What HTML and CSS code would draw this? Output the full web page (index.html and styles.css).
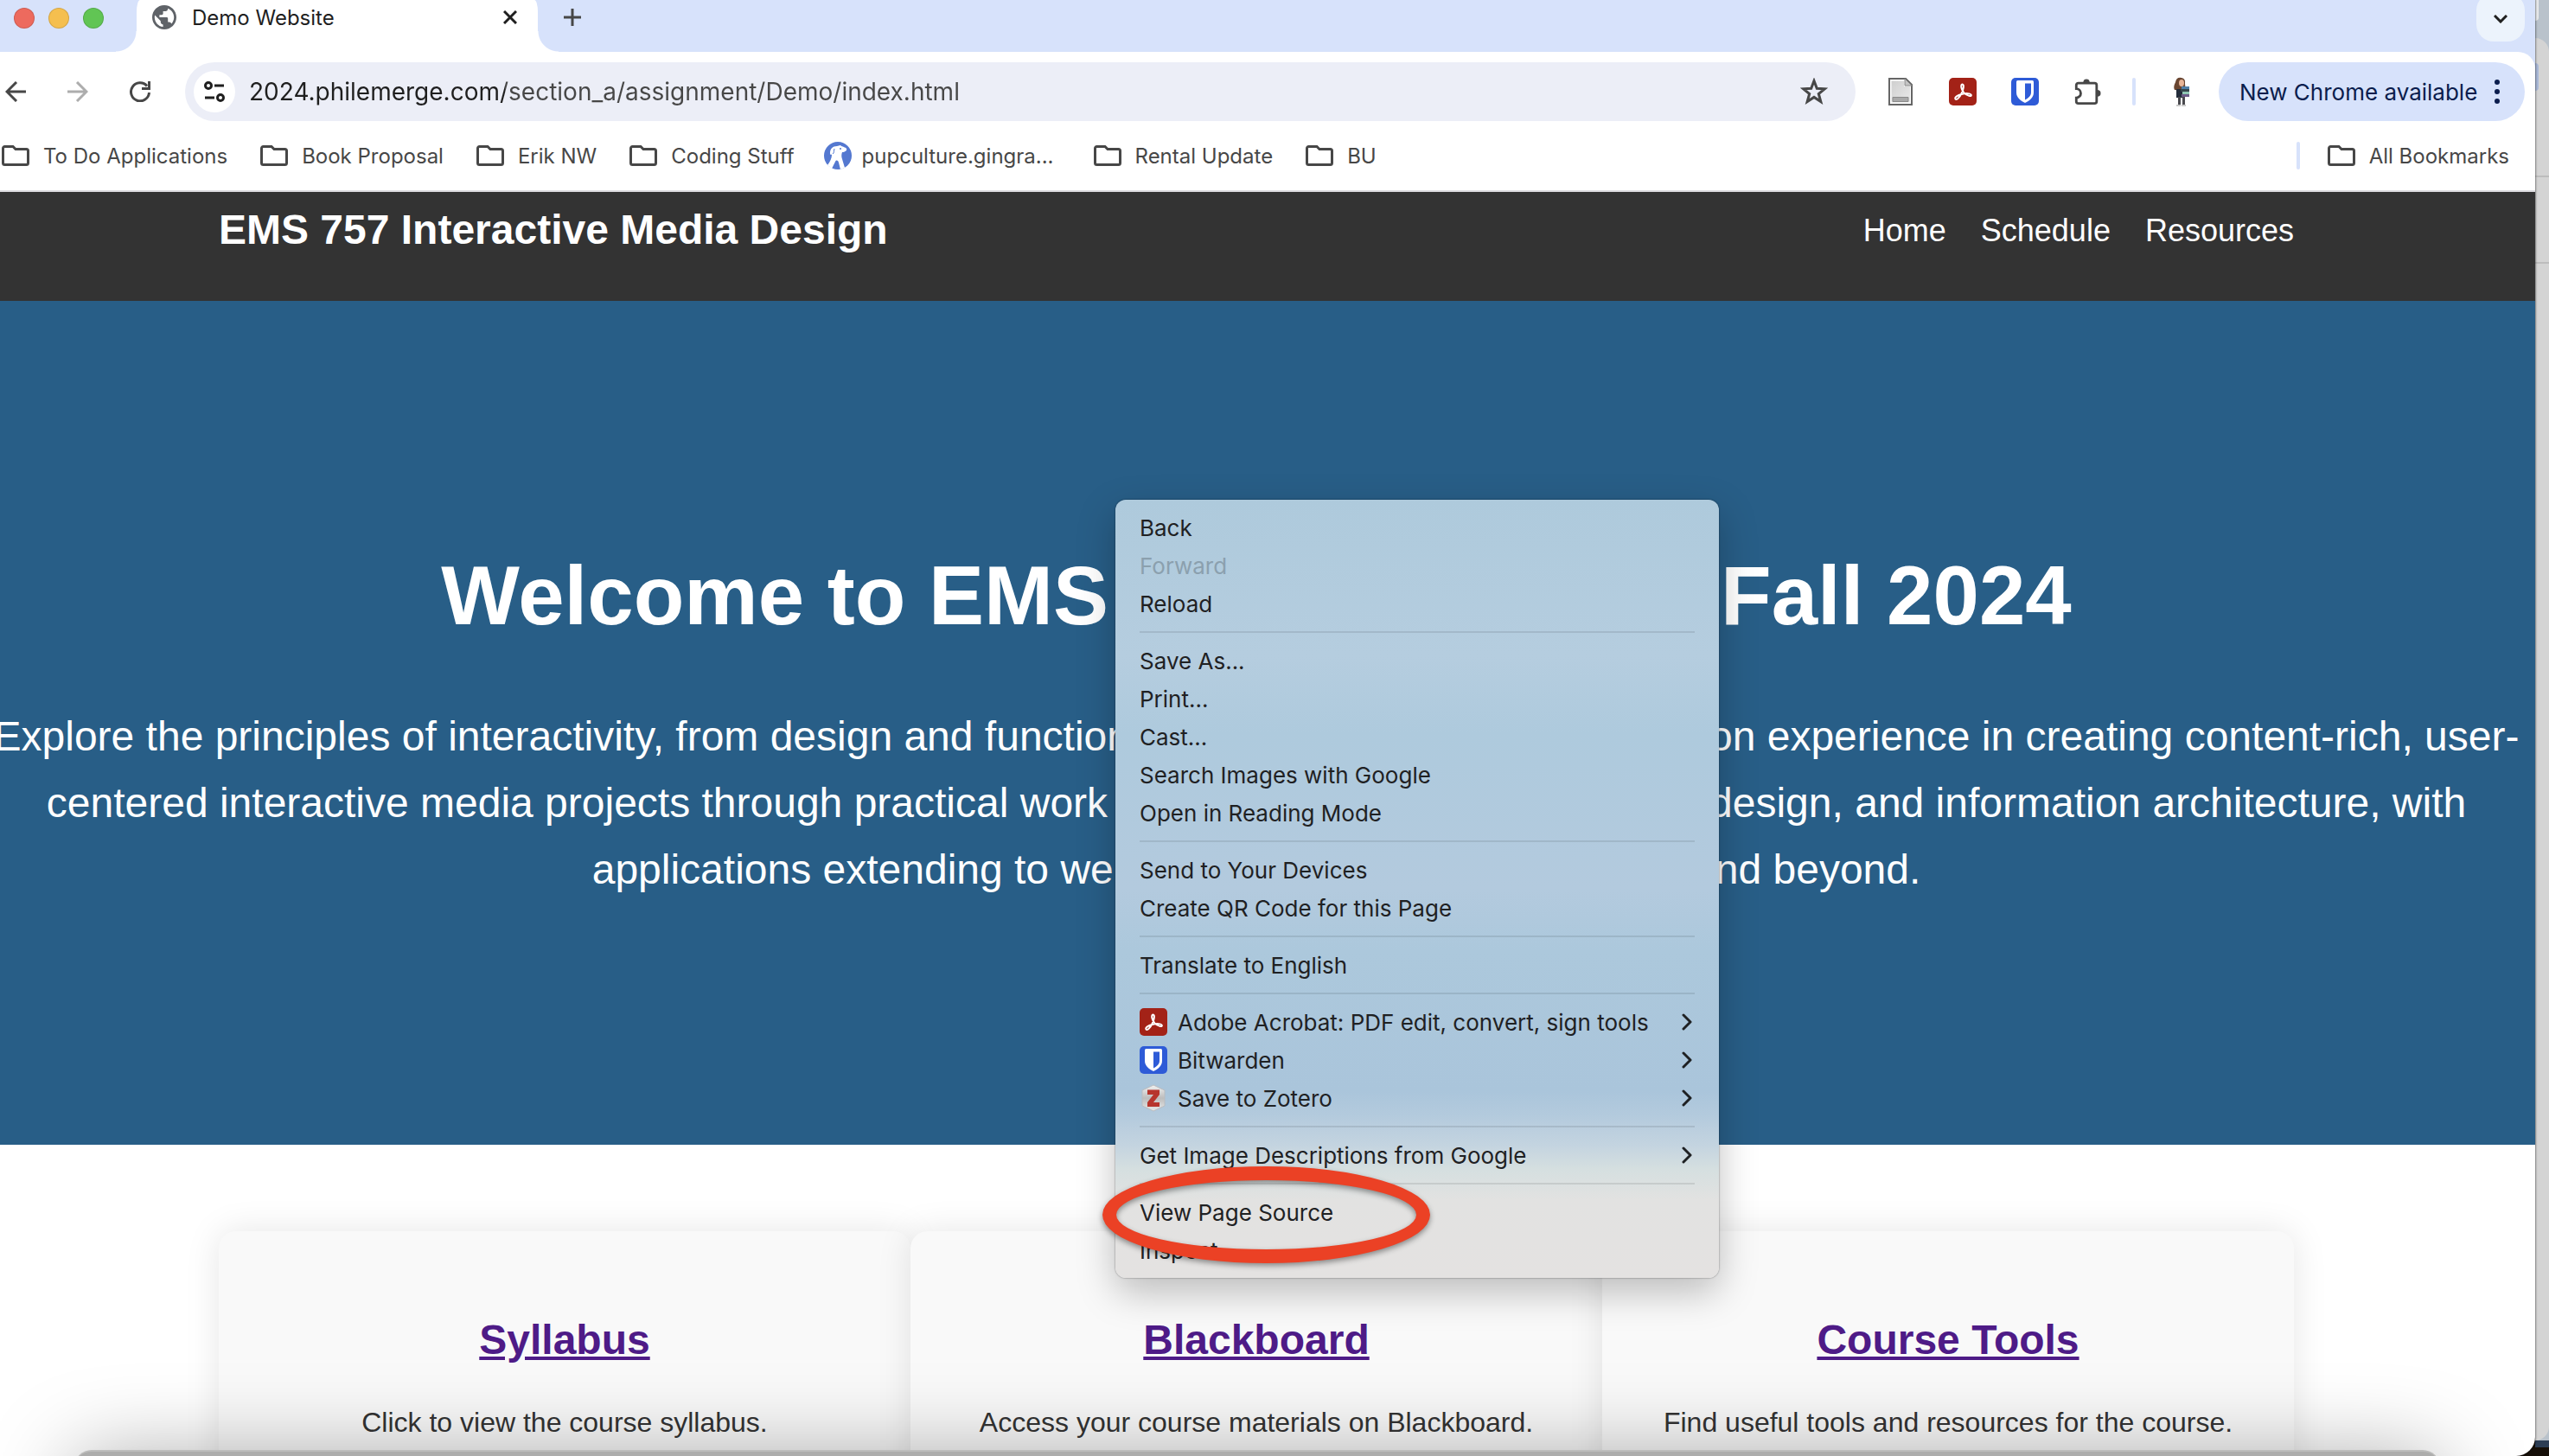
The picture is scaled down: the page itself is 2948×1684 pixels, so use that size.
FILE: index.html
```html
<!DOCTYPE html>
<html lang="en">
<head>
<meta charset="utf-8">
<title>Demo Website</title>
<link rel="stylesheet" href="styles.css">
</head>
<body>
<svg class="defs" aria-hidden="true">
  <symbol id="folder" viewBox="0 0 32 24"><path d="M1.500 4V20.500a2 2 0 0 0 2 2H28.500a2 2 0 0 0 2-2V6.500a2 2 0 0 0-2-2H16L13 1.500H3.500a2 2 0 0 0-2 2z" fill="none" stroke="#474747" stroke-width="3"/></symbol>
  <symbol id="acrobat" viewBox="0 0 32 32"><rect width="32" height="32" rx="5" fill="#a32217"/><path d="M7.500 24.500c-1.500-2 3-4.500 7-5.500 5-1.300 10.500-1.300 11.300.8.800 2.500-4.800 1-8.300-2.300C14.500 14.500 13 8 15.300 7.500c2.700-.3 1.700 6-1 11-2 4-5.200 7.700-6.800 6z" fill="none" stroke="#fff" stroke-width="2"/></symbol>
  <symbol id="bitwarden" viewBox="0 0 32 32"><rect width="32" height="32" rx="5" fill="#2e5bd7"/><path d="M6 4.500Q6 3 7.500 3H24.500Q26 3 26 4.500V17c0 6-5 9.500-10 12C11 26.500 6 23 6 17z" fill="#fff"/><path d="M16 6.500h7V17c0 4-3.500 6.500-7 8.500z" fill="#2e5bd7"/></symbol>
  <symbol id="chevron" viewBox="0 0 12 20"><path d="M2 2l8 8-8 8" fill="none" stroke="#1f2123" stroke-width="3" stroke-linecap="round" stroke-linejoin="round"/></symbol>
</svg>
<div class="desktop">
  <div class="window">
    <header class="chrome">
      <div class="tabstrip">
        <div class="lights">
          <button class="light red" aria-label="Close window"></button>
          <button class="light yellow" aria-label="Minimize window"></button>
          <button class="light green" aria-label="Zoom window"></button>
        </div>
        <div class="tab">
          <svg class="globe" viewBox="2 2 20 20"><path fill="#5f6368" d="M12 2C6.480 2 2 6.480 2 12s4.480 10 10 10 10-4.480 10-10S17.520 2 12 2zm-1 17.930c-3.950-.49-7-3.850-7-7.930 0-.62.080-1.210.21-1.790L9 15v1c0 1.100.9 2 2 2v1.930zm6.900-2.540c-.26-.81-1-1.390-1.900-1.390h-1v-3c0-.55-.45-1-1-1H8v-2h2c.55 0 1-.45 1-1V7h2c1.100 0 2-.9 2-2v-.41c2.930 1.190 5 4.060 5 7.410 0 2.080-.8 3.970-2.100 5.390z"/></svg>
          <span class="tab-title">Demo Website</span>
          <button class="tab-close" aria-label="Close tab"><svg viewBox="0 0 16 16"><path d="M1 1l14 14M15 1L1 15" stroke="#1f1f1f" stroke-width="3"/></svg></button>
        </div>
        <button class="new-tab" aria-label="New tab"><svg viewBox="0 0 20 20"><path d="M10 0v20M0 10h20" stroke="#474747" stroke-width="3"/></svg></button>
        <button class="tab-search" aria-label="Search tabs"><svg viewBox="0 0 16 10"><path d="M1 1l7 7 7-7" fill="none" stroke="#1f1f1f" stroke-width="3"/></svg></button>
      </div>
      <div class="toolbar">
        <div class="history">
          <button aria-label="Back"><svg viewBox="0 0 24 24"><path d="M24 12H2M13 1L2 12l11 11" fill="none" stroke="#474747" stroke-width="3"/></svg></button>
          <button aria-label="Forward" disabled><svg viewBox="0 0 24 24"><path d="M0 12h22M11 1l11 11-11 11" fill="none" stroke="#adadad" stroke-width="3"/></svg></button>
          <button aria-label="Reload"><svg viewBox="0 0 24 24"><path d="M22.500 13A10.500 10.500 0 1 1 20 5.500M22.500 0v8.500H14" fill="none" stroke="#474747" stroke-width="3"/></svg></button>
        </div>
        <div class="address">
          <button class="site-info" aria-label="Site information"><svg viewBox="0 0 24 24"><g fill="none" stroke="#1f1f1f" stroke-width="3"><circle cx="5" cy="5" r="3.500"/><path d="M12 5h11M1 19h11"/><circle cx="19" cy="19" r="3.500"/></g></svg></button>
          <input class="url" type="text" aria-label="Address" value="2024.philemerge.com/section_a/assignment/Demo/index.html">
          <button class="star" aria-label="Bookmark this page"><svg viewBox="0 0 32 32"><path d="M16 3.500l3.300 8.700 9.200.5-7.200 5.800 2.500 9L16 22.400 8.200 27.500l2.500-9-7.200-5.800 9.200-.5z" fill="none" stroke="#474747" stroke-width="3"/></svg></button>
        </div>
        <div class="extensions">
          <button aria-label="Save page"><svg viewBox="0 0 32 32"><defs><linearGradient id="pg" x1="0" y1="0" x2="1" y2="1"><stop offset="0" stop-color="#cfcfcf"/><stop offset="1" stop-color="#e9e9e9"/></linearGradient></defs><path d="M3 1H22l7 7v23H3z" fill="#fff" stroke="#666" stroke-width="2"/><path d="M5.500 3.500H20V10h7v18.500H5.500z" fill="url(#pg)"/><path d="M21 1v8h8z" fill="#c4c4c4" stroke="#888"/><path d="M7 22.500h18v5H7z" fill="#a9a9a9" stroke="#8b8b8b"/></svg></button>
          <button aria-label="Adobe Acrobat"><svg><use href="#acrobat"/></svg></button>
          <button aria-label="Bitwarden"><svg><use href="#bitwarden"/></svg></button>
          <button aria-label="Extensions"><svg viewBox="-2 0 34 32"><path d="M1.500 12V8a2.500 2.500 0 0 1 2.500-2.500H24A2.500 2.500 0 0 1 26.500 8V28a2.500 2.500 0 0 1-2.500 2.500H4A2.500 2.500 0 0 1 1.500 28V23.500a5.500 5.500 0 0 0 0-11z" fill="none" stroke="#474747" stroke-width="3"/><path d="M10 5a4 4.500 0 0 1 8 0zM27 14a4.500 4 0 0 1 0 8z" fill="#474747"/></svg></button>
        </div>
        <span class="divider"></span>
        <button class="profile" aria-label="Profile"><svg viewBox="0 0 32 34"><path d="M8 6Q9 0 15 1q5 1 4 7 1 6-1 8L7 15Q5 12 8 6z" fill="#6a4631"/><ellipse cx="15" cy="7" rx="3" ry="4" fill="#e8b597"/><path d="M9 14l8 0 2 10H9z" fill="#232d3b"/><path d="M11 23h3v9h-3zM16 23h3v9h-3z" fill="#4a4a4f"/><path d="M9 32h5v2H9zM15 32h5v2h-5z" fill="#c9c9c9"/><path d="M15 11h9v3h-9z" fill="#4f7fa8"/><path d="M14 14h10v3H14z" fill="#36474d"/><path d="M16 17h8v3h-8z" fill="#8fc6b4"/><path d="M15 20h9v3h-9z" fill="#6c5a86"/></svg></button>
        <button class="update">New Chrome available<svg viewBox="0 0 6 28"><g fill="#0b1d4d"><circle cx="3" cy="3" r="3"/><circle cx="3" cy="14" r="3"/><circle cx="3" cy="25" r="3"/></g></svg></button>
      </div>
      <nav class="bookmarks" aria-label="Bookmarks">
        <a href="#"><svg class="folder"><use href="#folder"/></svg>To Do Applications</a>
        <a href="#"><svg class="folder"><use href="#folder"/></svg>Book Proposal</a>
        <a href="#"><svg class="folder"><use href="#folder"/></svg>Erik NW</a>
        <a href="#"><svg class="folder"><use href="#folder"/></svg>Coding Stuff</a>
        <a class="site" href="#"><svg class="favicon" viewBox="0 0 32 32"><circle cx="16" cy="16" r="16" fill="#5478d0"/><path d="M7 13c0-5 3-8 8-8l4-1c2 2 6 2 7 4s-2 4-5 4c-1 3-1 5 0 8l3 10-5 2-2-8c-1-3-3-3-4-1l-4 8-5-4c3-4 5-8 5-12-1-1-2 1-2-2z" fill="#fff"/><path d="M12 8c-1 3 0 5-2 6" fill="none" stroke="#5478d0"/><circle cx="19" cy="8" r="1" fill="#5478d0"/></svg>pupculture.gingra...</a>
        <a href="#"><svg class="folder"><use href="#folder"/></svg>Rental Update</a>
        <a href="#"><svg class="folder"><use href="#folder"/></svg>BU</a>
        <span class="divider"></span>
        <a href="#"><svg class="folder"><use href="#folder"/></svg>All Bookmarks</a>
      </nav>
    </header>
    <div class="page">
      <header class="site-header">
        <div class="container">
          <div class="brand">EMS 757 Interactive Media Design</div>
          <nav class="site-nav"><a href="#">Home</a><a href="#">Schedule</a><a href="#">Resources</a></nav>
        </div>
      </header>
      <section class="hero">
        <h1 class="split"><span>Welcome to EMS</span><span>Fall 2024</span></h1>
        <p class="split tight"><span>Explore the principles of interactivity, from design and function</span><span>on experience in creating content-rich, user-</span></p>
        <p class="split"><span>centered interactive media projects through practical work</span><span>design, and information architecture, with</span></p>
        <p class="split"><span>applications extending to we</span><span>nd beyond.</span></p>
      </section>
      <main class="container cards">
        <article class="card"><h2><a href="#">Syllabus</a></h2><p>Click to view the course syllabus.</p></article>
        <article class="card"><h2><a href="#">Blackboard</a></h2><p>Access your course materials on Blackboard.</p></article>
        <article class="card"><h2><a href="#">Course Tools</a></h2><p>Find useful tools and resources for the course.</p></article>
      </main>
    </div>
    <div class="front-window"></div>
    <div class="menu" role="menu">
      <button role="menuitem">Back</button>
      <button role="menuitem" disabled>Forward</button>
      <button role="menuitem">Reload</button>
      <hr>
      <button role="menuitem">Save As...</button>
      <button role="menuitem">Print...</button>
      <button role="menuitem">Cast...</button>
      <button role="menuitem">Search Images with Google</button>
      <button role="menuitem">Open in Reading Mode</button>
      <hr>
      <button role="menuitem">Send to Your Devices</button>
      <button role="menuitem">Create QR Code for this Page</button>
      <hr>
      <button role="menuitem">Translate to English</button>
      <hr>
      <button role="menuitem"><svg class="item-icon"><use href="#acrobat"/></svg>Adobe Acrobat: PDF edit, convert, sign tools<svg class="more"><use href="#chevron"/></svg></button>
      <button role="menuitem"><svg class="item-icon"><use href="#bitwarden"/></svg>Bitwarden<svg class="more"><use href="#chevron"/></svg></button>
      <button role="menuitem"><svg class="item-icon" viewBox="0 0 32 32"><defs><linearGradient id="zh" x1="0" y1="0" x2="0" y2="1"><stop offset="0" stop-color="#f2f2f2"/><stop offset=".5" stop-color="#bdbdbd"/><stop offset="1" stop-color="#e8e8e8"/></linearGradient></defs><path d="M16 1l13 6v18l-13 6-13-6V7z" fill="url(#zh)" stroke="#b9bcc0"/><path d="M9 6.500h14v5.500l-7 9h7v5H9v-5l7-9H9z" fill="#b7352d"/></svg>Save to Zotero<svg class="more"><use href="#chevron"/></svg></button>
      <hr>
      <button role="menuitem">Get Image Descriptions from Google<svg class="more"><use href="#chevron"/></svg></button>
      <hr>
      <button role="menuitem">View Page Source</button>
      <button role="menuitem">Inspect</button>
      <div class="marker"></div>
    </div>
  </div>
  <div class="backdrop">
    <div class="back-top"></div>
    <div class="back-panel"><span class="glow"></span><span class="rule"></span><span class="rule"></span></div>
    <div class="dock"></div>
    <div class="ground"></div>
  </div>
</div>
</body>
</html>
```
FILE: styles.css
```css
* { box-sizing: border-box; }
body { margin: 0; font-family: "Liberation Sans", Arial, sans-serif; }
button { border: 0; padding: 0; background: none; color: inherit; font: inherit; display: block; }
svg { display: block; }
a { color: inherit; text-decoration: none; }
.defs { position: absolute; width: 0; height: 0; }

.desktop { display: flex; height: 100vh; overflow: hidden; background: #160f08; }

/* The browser window runs off the left edge of the screen */
.window { position: relative; z-index: 1; flex: 1; min-width: 0; margin-left: -26px; overflow: hidden; background: #fff; border-radius: 0 0 22px 0; box-shadow: 0 0 2px 1px #0006; }

.chrome { background: #d7e2fb; color: #474747; font-family: Inter, sans-serif; font-size: 24px; }
.tabstrip { display: flex; height: 60px; padding: 0 12px 0 42px; }
.lights { display: flex; gap: 16px; margin: 9px 38px 0 0; }
.light { width: 24px; height: 24px; border-radius: 50%; border: 1px solid #0002; }
.red { background: #ed6a5e; }
.yellow { background: #f5bf4f; }
.green { background: #61c554; }
.tab { position: relative; display: flex; align-items: center; width: 464px; height: 60px; padding: 0 24px 20px 18px; background: #fff; border-radius: 4px 4px 0 0 / 14px 14px 0 0; color: #1f1f1f; }
.tab::before, .tab::after { content: ""; position: absolute; bottom: 0; width: 24px; height: 24px; }
.tab::before { right: 100%; background: radial-gradient(circle at 0 0, #fff0 23px, #fff 24px); }
.tab::after { left: 100%; background: radial-gradient(circle at 100% 0, #fff0 23px, #fff 24px); }
.globe { width: 28px; height: 28px; }
.tab-title { flex: 1; margin-left: 18px; }
.tab-close svg { width: 16px; height: 16px; }
.new-tab { margin: 10px auto 0 30px; height: 20px; }
.new-tab svg { width: 20px; height: 20px; }
.tab-search { width: 56px; height: 56px; margin-top: -8px; padding-top: 4px; border-radius: 20px; background: #ecf3fc; }
.tab-search svg { width: 16px; height: 10px; margin: auto; }

.toolbar { display: flex; align-items: center; padding: 12px 12px 0 32px; background: #fff; border-radius: 0 20px 0 0; }
.history { display: flex; gap: 48px; margin-right: 40px; }
.history svg { width: 24px; height: 24px; }
.address { flex: 1; display: flex; align-items: center; height: 68px; padding: 0 32px 0 10px; border-radius: 34px; background: #eceef7; }
.site-info { width: 48px; height: 48px; border-radius: 50%; background: #fff; }
.site-info svg { width: 24px; height: 24px; margin: auto; }
.url { flex: 1; min-width: 0; margin-left: 16px; padding: 0; border: 0; outline: 0; font: 28px Inter, sans-serif; color: transparent; background: linear-gradient(to right, #1f1f1f 296px, #474747 296px); -webkit-background-clip: text; background-clip: text; }
.star svg { width: 32px; height: 32px; }
.extensions { display: flex; gap: 40px; margin: 0 36px; }
.extensions svg { width: 32px; height: 32px; }
.divider { width: 4px; height: 32px; border-radius: 2px; background: #d7e2fb; }
.profile { margin: 0 26px 0 38px; }
.profile svg { width: 32px; height: 34px; }
.update { display: flex; align-items: center; justify-content: space-between; width: 354px; height: 68px; padding: 0 29px 0 24px; border-radius: 34px; background: #d7e2fb; color: #0b1d4d; font-size: 26px; white-space: nowrap; }
.update svg { width: 6px; height: 28px; }

.bookmarks { display: flex; align-items: center; gap: 38px; height: 82px; padding: 0 30px 0 28px; background: #fff; border-bottom: 2px solid #dddce0; white-space: nowrap; }
.bookmarks a { display: flex; align-items: center; gap: 16px; }
.bookmarks .site { gap: 12px; margin: 0 8px 0 -4px; }
.bookmarks .divider { margin: 0 -6px 0 auto; }
.folder { width: 32px; height: 24px; }
.favicon { width: 32px; height: 32px; }

.container { max-width: 2400px; margin: 0 auto; }
.site-header { padding: 5px 0 44px; background: #333; color: #fff; }
.site-header .container { display: flex; align-items: center; justify-content: space-between; }
.brand { font-size: 48px; font-weight: bold; line-height: 77px; }
.site-nav { display: flex; gap: 40px; padding-top: 2px; font-size: 36px; line-height: 58px; }
.hero { padding: 264px 0 280px; background: #285e87; color: #fff; }
.hero h1 { margin: 0 0 47px; font-size: 96px; line-height: 154px; }
.hero p { margin: 0; font-size: 48px; line-height: 77px; }
.split { display: flex; justify-content: center; gap: 696px; white-space: nowrap; }
.hero h1.split { gap: 708px; }
.tight { gap: 670px; }
.cards { display: grid; grid-template-columns: repeat(3, 1fr); padding-top: 100px; }
.card { padding: 87px 40px; border-radius: 20px; background: #f9f9f9; box-shadow: 0 0 40px #0000001a; text-align: center; color: #333; }
.card h2 { margin: 0 0 32px; font-size: 48px; line-height: 77px; color: #4e1b87; }
.card h2 a { text-decoration: underline; }
.card p { margin: 0; font-size: 32px; line-height: 51px; }

/* Top edge of another window rising over the bottom of this one */
.front-window { position: absolute; left: 112px; right: 110px; top: calc(100% - 7px); height: 400px; border-radius: 20px; border-top: 2px solid #bdbdbc; background: #adadac; box-shadow: 0 10px 100px #00000059; }

.menu { position: absolute; left: 1316px; top: 578px; width: 698px; padding: 10px 28px; border-radius: 12px; color: #1f2123; font: 26px Inter, sans-serif; background: linear-gradient(#aecadc, #b5cddf 20%, #aecadd 30%, #b3cade 50%, #acc8dc 58%, #aac5db 76%, #b3cadd 79%, #c4d4e0 83%, #d5dfe0 86%, #e2e2e1 90%, #e4e2e1); box-shadow: 0 0 2px #0008, 0 16px 44px #00000040; }
.menu button { display: flex; align-items: center; width: 100%; height: 44px; text-align: left; white-space: nowrap; }
.menu button:disabled { color: #8ba0ae; }
.menu hr { height: 2px; margin: 10px 0; border: 0; background: #00000018; }
.item-icon { width: 32px; height: 32px; margin-right: 12px; }
.more { width: 12px; height: 20px; margin: 0 3px 0 auto; }
.marker { position: absolute; left: -15px; top: 771px; width: 379px; height: 112px; border: 16px solid #eb4125; border-radius: 50%; filter: drop-shadow(0 3px 3px #0006); }

/* Sliver of the desktop to the right of the browser */
.backdrop { display: flex; flex-direction: column; width: 16px; background: #b9c2cb; }
.back-top { width: 4px; height: 24px; margin-bottom: 20px; border-radius: 0 0 4px 0; background: #e8eaec; }
.back-panel { flex: 1; display: flex; flex-direction: column; border-radius: 0 16px 16px 0; background: #d4d4d4; }
.glow { width: 4px; height: 32px; margin: 29px 0 98px; border-radius: 0 4px 4px 0; background: #aab9d8; }
.rule { height: 2px; margin-bottom: 98px; background: #bdbdbd; }
.dock { height: 8px; background: #2c3d54; }
.ground { height: 10px; background: #160f08; }
```
